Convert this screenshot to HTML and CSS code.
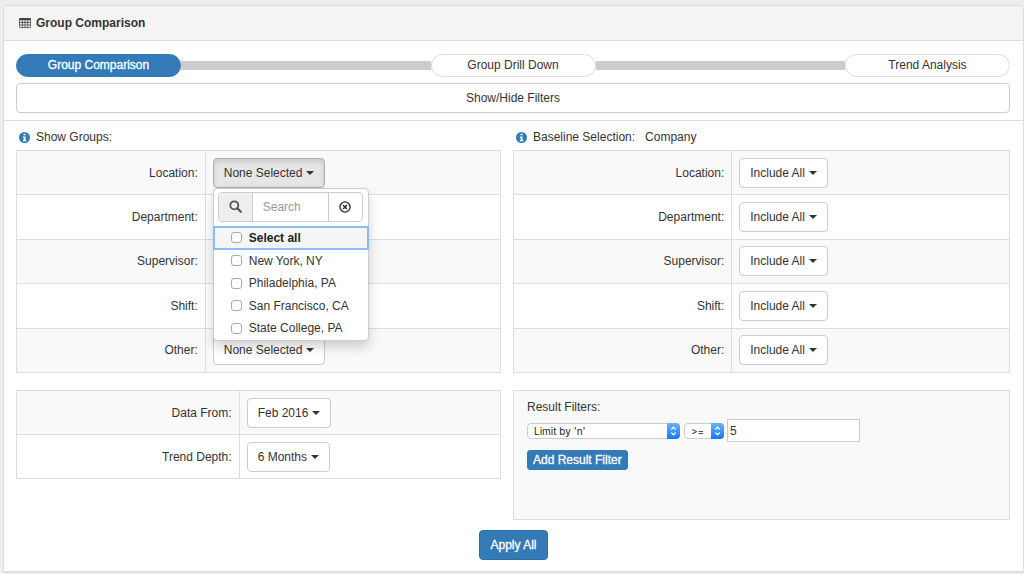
FILE: index.html
```html
<!DOCTYPE html>
<html lang="en">
<head>
<meta charset="utf-8">
<title>Group Comparison</title>
<link rel="stylesheet" href="styles.css">
</head>
<body>
<main class="panel">
  <header class="panel-head">
    <svg class="icon-table" viewBox="0 0 12 11" aria-hidden="true"><path d="M.5 1.500V8.900q0 .7.7.7H10.800q.7 0 .7-.7V1.500M.5 4.500H11.500M.5 7H11.500M3.400 1.500V9.500M6 1.500V9.500M8.700 1.500V9.500" fill="none" stroke="#444" stroke-width=".8"/><path d="M0 2.200V.9Q0 0 .9 0H11.100Q12 0 12 .9V2.200z" fill="#444"/></svg>
    <h1 class="title">Group Comparison</h1>
  </header>

  <section class="top">
    <nav class="steps" aria-label="Steps">
      <a href="#comparison" class="step active" aria-current="step">Group Comparison</a>
      <span class="track"></span>
      <a href="#drill" class="step">Group Drill Down</a>
      <span class="track"></span>
      <a href="#trend" class="step">Trend Analysis</a>
    </nav>
    <button type="button" class="btn wide">Show/Hide Filters</button>
  </section>

  <section class="filters">
    <div class="column">
      <h2 class="group-title"><svg class="icon-info" viewBox="0 0 12 12" aria-hidden="true"><circle cx="6" cy="6" r="6" fill="#337ab7"/><path d="M5 1.800h2.100v1.800H5zM4.200 4.800h2.900v3.900h.9V10H4.200V8.700h.9V6h-.9z" fill="#fff"/></svg>Show Groups:</h2>
      <table class="grid groups">
        <tr><th scope="row">Location:</th><td>
          <div class="dropdown">
            <button type="button" class="btn open" aria-expanded="true">None Selected<span class="caret"></span></button>
            <div class="menu">
              <div class="search">
                <span class="addon"><svg class="icon-search" viewBox="0 0 13 13" aria-hidden="true"><circle cx="5.300" cy="5.300" r="4" fill="none" stroke="#555" stroke-width="1.800"/><path d="M8.300 8.300L11.800 11.800" stroke="#555" stroke-width="2.200" stroke-linecap="round"/></svg></span>
                <input type="text" class="search-input" placeholder="Search" aria-label="Search locations">
                <button type="button" class="clear" aria-label="Clear search"><svg class="icon-clear" viewBox="0 0 12 12" aria-hidden="true"><circle cx="6" cy="6" r="5.100" fill="none" stroke="#333" stroke-width="1.400"/><path d="M4 4l4 4M8 4L4 8" stroke="#333" stroke-width="1.600"/></svg></button>
              </div>
              <div class="options">
                <label class="option all"><input type="checkbox" class="check">Select all</label>
                <label class="option"><input type="checkbox" class="check">New York, NY</label>
                <label class="option"><input type="checkbox" class="check">Philadelphia, PA</label>
                <label class="option"><input type="checkbox" class="check">San Francisco, CA</label>
                <label class="option"><input type="checkbox" class="check">State College, PA</label>
              </div>
            </div>
          </div>
        </td></tr>
        <tr><th scope="row">Department:</th><td><button type="button" class="btn">None Selected<span class="caret"></span></button></td></tr>
        <tr><th scope="row">Supervisor:</th><td><button type="button" class="btn">None Selected<span class="caret"></span></button></td></tr>
        <tr><th scope="row">Shift:</th><td><button type="button" class="btn">None Selected<span class="caret"></span></button></td></tr>
        <tr><th scope="row">Other:</th><td><button type="button" class="btn">None Selected<span class="caret"></span></button></td></tr>
      </table>
      <table class="grid dates">
        <tr><th scope="row">Data From:</th><td><button type="button" class="btn">Feb 2016<span class="caret"></span></button></td></tr>
        <tr><th scope="row">Trend Depth:</th><td><button type="button" class="btn">6 Months<span class="caret"></span></button></td></tr>
      </table>
    </div>

    <div class="column">
      <h2 class="group-title"><svg class="icon-info" viewBox="0 0 12 12" aria-hidden="true"><circle cx="6" cy="6" r="6" fill="#337ab7"/><path d="M5 1.800h2.100v1.800H5zM4.200 4.800h2.900v3.900h.9V10H4.200V8.700h.9V6h-.9z" fill="#fff"/></svg>Baseline Selection:<span class="scope">Company</span></h2>
      <table class="grid groups baseline">
        <tr><th scope="row">Location:</th><td><button type="button" class="btn">Include All<span class="caret"></span></button></td></tr>
        <tr><th scope="row">Department:</th><td><button type="button" class="btn">Include All<span class="caret"></span></button></td></tr>
        <tr><th scope="row">Supervisor:</th><td><button type="button" class="btn">Include All<span class="caret"></span></button></td></tr>
        <tr><th scope="row">Shift:</th><td><button type="button" class="btn">Include All<span class="caret"></span></button></td></tr>
        <tr><th scope="row">Other:</th><td><button type="button" class="btn">Include All<span class="caret"></span></button></td></tr>
      </table>
      <div class="results">
        <h3 class="results-title">Result Filters:</h3>
        <div class="rule">
          <span class="select-wrap field"><select class="select" aria-label="Filter field"><option>Limit by 'n'</option></select><svg class="arrows" viewBox="0 0 12 16" aria-hidden="true"><path d="M3.800 6.500L6 4.200l2.200 2.300M3.800 9.500L6 11.800l2.200-2.300" fill="none" stroke="#fff" stroke-width="1.200"/></svg></span>
          <span class="select-wrap operator"><select class="select" aria-label="Operator"><option>&gt;=</option></select><svg class="arrows" viewBox="0 0 12 16" aria-hidden="true"><path d="M3.800 6.500L6 4.200l2.200 2.300M3.800 9.500L6 11.800l2.200-2.300" fill="none" stroke="#fff" stroke-width="1.200"/></svg></span>
          <input type="text" class="value" value="5" aria-label="Filter value">
        </div>
        <button type="button" class="add">Add Result Filter</button>
      </div>
    </div>
  </section>

  <footer class="actions"><button type="button" class="btn primary">Apply All</button></footer>
</main>
</body>
</html>
```

FILE: styles.css
```css
* { box-sizing: border-box; }
body {
  margin: 0;
  padding: 5px 0 0 3px;
  background: #ededed;
  color: #333;
  font: 12px/18px "Liberation Sans", Arial, sans-serif;
}
button, input, select { font: inherit; color: inherit; margin: 0; }
h1, h2, h3 { margin: 0; font-size: 12px; font-weight: 400; }

.panel {
  background: #fff;
  border: 1px solid #ddd;
  border-radius: 4px 4px 0 0;
}
.panel-head {
  display: flex;
  align-items: center;
  gap: 5px;
  height: 35px;
  padding-left: 15px;
  background: #f4f4f4;
  border-bottom: 1px solid #ddd;
  border-radius: 3px 3px 0 0;
}
.panel-head .title { font-weight: 700; }
.icon-table { width: 12px; height: 11px; }

.top { padding: 13px 13px 7px 12px; border-bottom: 1px solid #ddd; }
.steps { display: flex; align-items: center; margin-bottom: 6px; }
.step {
  flex: 0 0 165px;
  height: 23px;
  border: 1px solid #ddd;
  border-radius: 12px;
  line-height: 21px;
  text-align: center;
  color: #333;
  text-decoration: none;
}
.step.active { background: #337ab7; border-color: #337ab7; color: #fff; -webkit-text-stroke: 0.3px #fff; }
.track { flex: 1; height: 9px; background: #ccc; }

.btn {
  display: inline-flex;
  align-items: center;
  justify-content: center;
  height: 30px;
  padding: 0 10px;
  border: 1px solid #ccc;
  border-radius: 4px;
  background: #fff;
  white-space: nowrap;
}
.btn.wide { display: flex; width: 100%; }
.btn.open {
  background: #e6e6e6;
  border-color: #adadad;
  box-shadow: inset 0 3px 5px rgba(0, 0, 0, .125);
}
.btn.primary { background: #337ab7; border-color: #2e6da4; color: #fff; -webkit-text-stroke: 0.3px #fff; }
.caret {
  margin-left: 4px;
  border: 4px solid transparent;
  border-top-color: currentColor;
  border-bottom: 0;
}

.filters {
  display: grid;
  grid-template-columns: 485fr 497fr;
  gap: 12px;
  padding: 7px 13px 0 12px;
}
.group-title { display: flex; align-items: center; height: 18px; margin-bottom: 4px; padding-left: 3px; }
.icon-info { width: 11px; height: 11px; margin-right: 6px; }
.scope { margin-left: 10px; }

.grid { width: 100%; table-layout: fixed; border-collapse: collapse; margin-bottom: 17px; }
.grid th, .grid td { border: 1px solid #ddd; padding: 0 7px; vertical-align: middle; }
.grid th { text-align: right; font-weight: 400; width: 39%; }
.grid td { text-align: left; }
.grid tr:nth-child(odd) { background: #f9f9f9; }
.groups { height: 223px; }
.baseline th { width: 44%; }
.dates { height: 89px; margin-bottom: 0; }
.dates th { width: 46%; }
.grid .btn { vertical-align: middle; }

.dropdown { position: relative; }
.menu {
  position: absolute;
  z-index: 2;
  top: 100%;
  left: 0;
  width: 156px;
  padding-top: 3px;
  background: #fff;
  border: 1px solid #ccc;
  border-radius: 4px;
  box-shadow: 0 6px 12px rgba(0, 0, 0, .18);
}
.search { display: flex; height: 30px; margin: 0 5px 5px 4px; border: 1px solid #ccc; border-radius: 4px; }
.addon { display: flex; align-items: center; justify-content: center; width: 34px; background: #eee; border-right: 1px solid #ccc; border-radius: 3px 0 0 3px; }
.icon-search { width: 13px; height: 13px; }
.search-input { flex: 1; min-width: 0; padding: 0 10px; border: 0; background: none; }
.search-input::placeholder { color: #999; opacity: 1; }
.clear { display: flex; align-items: center; justify-content: center; width: 34px; padding: 0; border: 0; border-left: 1px solid #ccc; background: none; }
.icon-clear { width: 12px; height: 12px; }
.options { display: grid; grid-auto-rows: 1fr; height: 113px; }
.option { display: flex; align-items: center; gap: 7px; padding-left: 17px; }
.option.all { font-weight: 700; background: #f5f5f5; outline: 2px solid #88bdf5; outline-offset: -1px; color: #222; }
.check { appearance: none; width: 11px; height: 11px; border: 1px solid #aaa; border-radius: 3px; background: #fff; }

.results { min-height: 130px; padding: 7px 13px; background: #f9f9f9; border: 1px solid #ddd; }
.rule { display: flex; align-items: center; margin-top: 3px; }
.select-wrap { position: relative; display: flex; height: 16px; margin-right: 4px; }
.select {
  appearance: none;
  width: 100%;
  padding: 0 14px 0 6px;
  border: 1px solid #ccc;
  border-radius: 4px;
  background: #fff;
  font: 10px/14px Inter, sans-serif;
  color: #222;
}
.field { width: 153px; }
.operator { width: 40px; margin-right: 3px; }
.arrows {
  position: absolute;
  top: 0;
  right: 0;
  width: 13px;
  height: 16px;
  background: linear-gradient(#6bb2fc, #1479fb);
  border-radius: 0 4px 4px 0;
  pointer-events: none;
}
.value { width: 133px; height: 23px; padding: 0 2px; border: 1px solid #ccc; background: #fff; }
.add {
  display: block;
  height: 20px;
  margin-top: 8px;
  padding: 0 5px;
  border: 1px solid #337ab7;
  border-radius: 3px;
  background: #337ab7;
  color: #fff;
  -webkit-text-stroke: 0.3px #fff;
  line-height: 18px;
}

.actions { padding: 10px 0 11px; text-align: center; border-bottom: 1px solid #ddd; }
.actions .btn { vertical-align: top; }
```
